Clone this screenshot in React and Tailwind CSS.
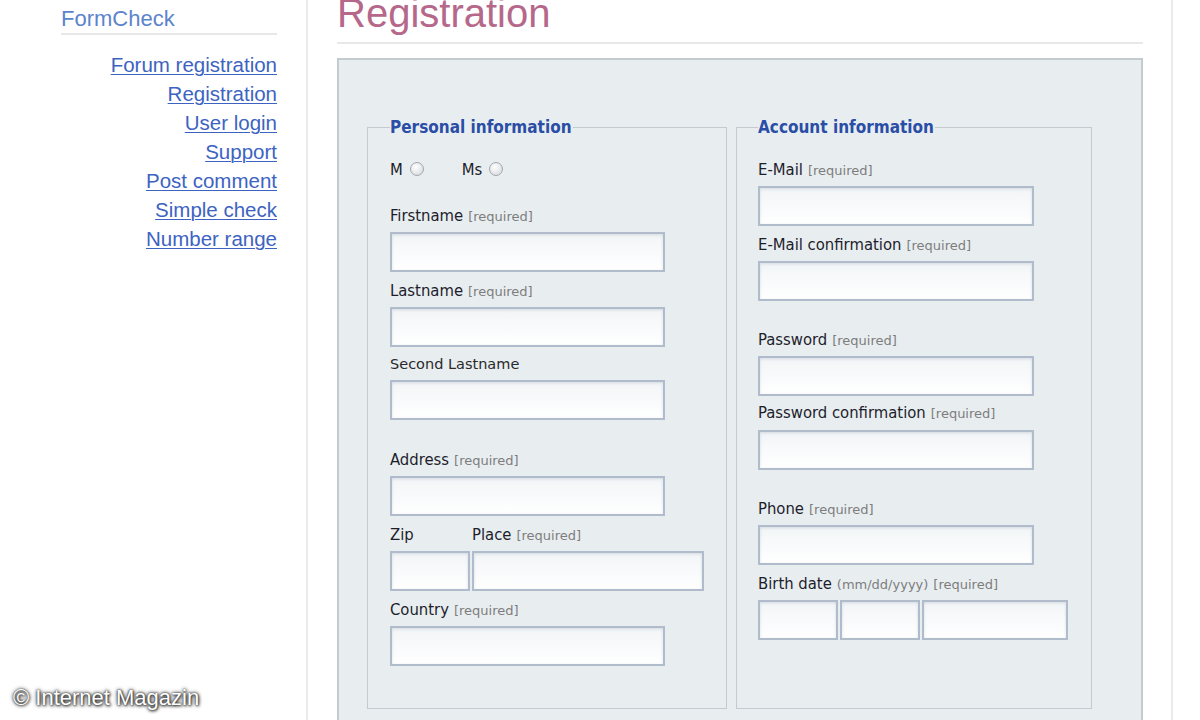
import React from 'react';

const navLinks = [
  'Forum registration',
  'Registration',
  'User login',
  'Support',
  'Post comment',
  'Simple check',
  'Number range',
];

function Req() {
  return (
    <span className="ml-[5px] font-['DejaVu_Sans',sans-serif] text-[13px] text-[#7d7d7d]">
      [required]
    </span>
  );
}

function Label({ children, req, extra, className = '' }) {
  return (
    <div className={`h-[20px] leading-[20px] whitespace-nowrap text-[16.5px] text-[#1d1d2b] ${className}`}>
      {children}
      {extra && (
        <span className="ml-[5px] font-['DejaVu_Sans',sans-serif] text-[13px] text-[#7d7d7d]">{extra}</span>
      )}
      {req && <Req />}
    </div>
  );
}

function Input({ w = 'w-[275px]', className = '' }) {
  return (
    <div
      className={`h-[40px] ${w} border-2 border-[#b0bccb] bg-gradient-to-b from-[#f2f5f7] to-white shadow-[inset_0_1px_3px_rgba(120,140,160,0.25)] ${className}`}
    />
  );
}

function Radio() {
  return (
    <span className="inline-block ml-[7px] h-[14px] w-[14px] rounded-full border border-[#a3a8ad] bg-[radial-gradient(circle_at_40%_35%,#ffffff,#d0d4d8)] align-[-1px]" />
  );
}

function Legend({ children }) {
  return (
    <legend className="h-[20px] leading-[20px] pr-[1px] text-[17px] font-bold text-[#2a4ea6]">
      {children}
    </legend>
  );
}

export default function App() {
  return (
    <div className="relative h-[720px] w-[1200px] overflow-hidden bg-white font-['Liberation_Sans',Arial,sans-serif]">
      <div className="flex h-full">
        {/* Sidebar */}
        <div className="w-[306px] shrink-0 pl-[61px] pr-[29px] pt-[6px]">
          <div className="border-b-2 border-[#e6e8ea] pb-[1px] text-[22px] leading-[26px] text-[#5c84cc]">
            FormCheck
          </div>
          <nav className="mt-[15px] flex flex-col items-end">
            {navLinks.map((l) => (
              <a
                key={l}
                href="#"
                className="text-[20.5px] leading-[29px] text-[#3d63c2] underline decoration-1 underline-offset-[2px]"
              >
                {l}
              </a>
            ))}
          </nav>
        </div>

        {/* Main */}
        <div className="flex w-[867px] shrink-0 flex-col border-x-2 border-[#eaeaea] pl-[29px] pr-[28px]">
          <h1 className="mt-[-7px] h-[40px] shrink-0 text-[40px] leading-[40px] text-[#b5688a]">Registration</h1>
          <div className="mt-[9px] h-[2px] shrink-0 bg-[#e6e8ea]" />

          <div className="mt-[14px] flex h-[700px] shrink-0 gap-[9px] border-2 border-[#c3cbd1] bg-[#e8edf0] pl-[28px] pt-[57px] font-['DejaVu_Sans_Condensed','DejaVu_Sans',sans-serif]">
            {/* Personal information */}
            <fieldset className="h-[592px] w-[360px] border border-[#c3cad0] pl-[22px]">
              <Legend>Personal information</Legend>
              <div className="mt-[23px] h-[20px] leading-[20px] text-[16.5px] text-[#1d1d2b]">
                M<Radio />
                <span className="ml-[38px]">Ms</span>
                <Radio />
              </div>

              <Label req className="mt-[26px]">Firstname</Label>
              <Input className="mt-[6px]" />

              <Label req className="mt-[9px]">Lastname</Label>
              <Input className="mt-[6px]" />

              <div className="mt-[7px] h-[20px] leading-[20px] font-['DejaVu_Sans',sans-serif] text-[14.5px] text-[#2a2a2a]">
                Second Lastname
              </div>
              <Input className="mt-[6px]" />

              <Label req className="mt-[30px]">Address</Label>
              <Input className="mt-[6px]" />

              <div className="mt-[9px] flex">
                <Label className="w-[82px]">Zip</Label>
                <Label req>Place</Label>
              </div>
              <div className="mt-[6px] flex gap-[2px]">
                <Input w="w-[80px]" />
                <Input w="w-[232px]" />
              </div>

              <Label req className="mt-[9px]">Country</Label>
              <Input className="mt-[6px]" />
            </fieldset>

            {/* Account information */}
            <fieldset className="h-[592px] w-[356px] border border-[#c3cad0] pl-[21px]">
              <Legend>Account information</Legend>

              <Label req className="mt-[23px]">E-Mail</Label>
              <Input w="w-[276px]" className="mt-[6px]" />

              <Label req className="mt-[9px]">E-Mail confirmation</Label>
              <Input w="w-[276px]" className="mt-[6px]" />

              <Label req className="mt-[29px]">Password</Label>
              <Input w="w-[276px]" className="mt-[6px]" />

              <Label req className="mt-[7px]">Password confirmation</Label>
              <Input w="w-[276px]" className="mt-[7px]" />

              <Label req className="mt-[29px]">Phone</Label>
              <Input w="w-[276px]" className="mt-[6px]" />

              <Label req extra="(mm/dd/yyyy)" className="mt-[9px]">Birth date</Label>
              <div className="mt-[6px] flex gap-[2px]">
                <Input w="w-[80px]" />
                <Input w="w-[80px]" />
                <Input w="w-[146px]" />
              </div>
            </fieldset>
          </div>
        </div>
      </div>

      {/* watermark */}
      <div className="absolute bottom-[10px] left-[13px] text-[22px] leading-[24px] text-white [text-shadow:0_0_4px_#222,0_0_2px_#333,1px_1px_3px_#444]">
        © Internet Magazin
      </div>
    </div>
  );
}
